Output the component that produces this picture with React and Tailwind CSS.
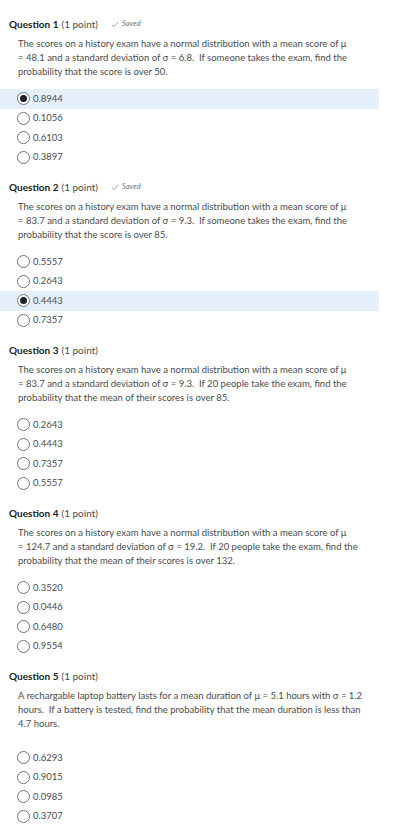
import React from 'react';

const questions = [
  {
    n: 1,
    saved: true,
    text: 'The scores on a history exam have a normal distribution with a mean score of μ =\u00a048.1 and a standard deviation of σ =\u00a06.8.  If someone takes the exam, find the probability that the score is over 50.',
    options: ['0.8944', '0.1056', '0.6103', '0.3897'],
    selected: 0,
  },
  {
    n: 2,
    saved: true,
    text: 'The scores on a history exam have a normal distribution with a mean score of μ =\u00a083.7 and a standard deviation of σ =\u00a09.3.  If someone takes the exam, find the probability that the score is over 85.',
    options: ['0.5557', '0.2643', '0.4443', '0.7357'],
    selected: 2,
  },
  {
    n: 3,
    text: 'The scores on a history exam have a normal distribution with a mean score of μ =\u00a083.7 and a standard deviation of σ =\u00a09.3.  If 20 people take the exam, find the probability that the mean of their scores is over 85.',
    options: ['0.2643', '0.4443', '0.7357', '0.5557'],
  },
  {
    n: 4,
    text: 'The scores on a history exam have a normal distribution with a mean score of μ =\u00a0124.7 and a standard deviation of σ =\u00a019.2.  If 20 people take the exam, find the probability that the mean of their scores is over 132.',
    options: ['0.3520', '0.0446', '0.6480', '0.9554'],
  },
  {
    n: 5,
    text: 'A rechargable laptop battery lasts for a mean duration of μ =\u00a05.1 hours with σ =\u00a01.2 hours.  If a battery is tested, find the probability that the mean duration is less than 4.7 hours.',
    options: ['0.6293', '0.9015', '0.0985', '0.3707'],
    extraGap: true,
  },
];

const Radio = ({ checked }) => (
  <span className="flex h-[13px] w-[13px] shrink-0 items-center justify-center rounded-full border border-[#6e7376] bg-white">
    {checked && <span className="h-[7px] w-[7px] rounded-full bg-[#202122]" />}
  </span>
);

const Question = ({ q }) => (
  <div className="pb-[10px]">
    <div className="flex h-[20px] items-center pl-[9px] text-[10px] text-[#202122]">
      <span className="font-bold">Question {q.n}</span>
      <span className="ml-[3px] text-[#494c4e]">(1 point)</span>
      {q.saved && (
        <span className="ml-[13px] flex items-center gap-[3px] text-[7.5px] italic text-[#6e7376]">
          <svg width="8" height="7" viewBox="0 0 8 7" fill="none">
            <path d="M1 3.8 L3 5.6 L7 1" stroke="#a0a4a7" strokeWidth="1" />
          </svg>
          Saved
        </span>
      )}
    </div>
    <p className={`mt-[3px] w-[372px] whitespace-pre-wrap pl-[18px] text-[9.5px] leading-[14px] text-[#494c4e] ${q.extraGap ? 'mb-[17px]' : 'mb-[10px]'}`}>
      {q.text}
    </p>
    <div className="flex flex-col">
      {q.options.map((o, i) => (
        <div
          key={o}
          className={`mr-[39px] flex h-[19.5px] items-center gap-[3px] pl-[17px] text-[9.5px] text-[#494c4e] ${q.selected === i ? 'bg-[#e6f0fa]' : ''}`}
        >
          <Radio checked={q.selected === i} />
          <span>{o}</span>
        </div>
      ))}
    </div>
  </div>
);

export default function App() {
  return (
    <div className="min-h-[829px] w-[418px] bg-white pt-[14px]" style={{ fontFamily: 'Lato, "Noto Sans", sans-serif' }}>
      {questions.map((q) => (
        <Question key={q.n} q={q} />
      ))}
    </div>
  );
}
